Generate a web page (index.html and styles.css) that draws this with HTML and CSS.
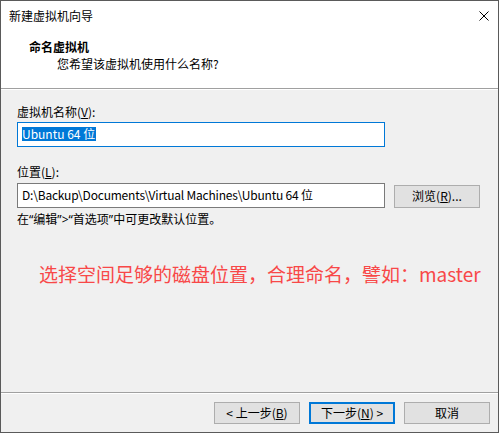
FILE: index.html
```html
<!DOCTYPE html>
<html lang="zh-CN">
<head>
<meta charset="utf-8">
<title>新建虚拟机向导</title>
<link rel="stylesheet" href="styles.css">
</head>
<body>
<div class="window">
  <div class="titlebar">
    <span class="title">新建虚拟机向导</span>
    <svg class="close" width="10" height="10" viewBox="0 0 10 10"><path d="M0.5 0.5 L9.5 9.5 M9.5 0.5 L0.5 9.5" stroke="#000" stroke-width="1" fill="none"/></svg>
  </div>
  <div class="header">
    <div class="heading">命名虚拟机</div>
    <div class="subtitle">您希望该虚拟机使用什么名称?</div>
  </div>
  <div class="content">
    <div class="label">虚拟机名称(<u>V</u>):</div>
    <div class="input focused"><span class="sel">Ubuntu 64 位</span></div>
    <div class="label second">位置(<u>L</u>):</div>
    <div class="row">
      <div class="input path">D:\Backup\Documents\Virtual Machines\Ubuntu 64 位</div>
      <div class="btn browse">浏览(<u>R</u>)...</div>
    </div>
    <div class="note">在<span class="q">“</span>编辑<span class="q">”&gt;“</span>首选项<span class="q">”</span>中可更改默认位置。</div>
    <div class="hint">选择空间足够的磁盘位置，合理命名，譬如：master</div>
  </div>
  <div class="footer">
    <div class="btn">&lt; 上一步(<u>B</u>)</div>
    <div class="btn default">下一步(<u>N</u>) &gt;</div>
    <div class="btn cancel">取消</div>
  </div>
</div>
</body>
</html>
```

FILE: styles.css
```css
* { box-sizing: border-box; }
html, body { margin: 0; padding: 0; }
body {
  width: 499px;
  height: 433px;
  font-family: "Noto Sans CJK SC", "Noto Sans", sans-serif;
  font-size: 12px;
  color: #000;
  background: #f0f0f0;
}
.window {
  width: 499px;
  height: 433px;
  border: 1px solid #5a5a5a;
  background: #f0f0f0;
  display: flex;
  flex-direction: column;
}
.titlebar {
  height: 30px;
  background: #fff;
  display: flex;
  align-items: center;
  justify-content: space-between;
  padding: 0 9px 0 8px;
  line-height: 16px;
}
.close { display: block; margin-top: -1px; }
.header {
  height: 58px;
  background: #fff;
  padding: 8px 0 0 28px;
  border-bottom: 1px solid #a0a0a0;
  box-shadow: 0 1px 0 #fff;
  line-height: 16px;
}
.heading { font-weight: bold; }
.subtitle { padding-left: 28px; margin-top: 1px; }
.content {
  padding: 15px 16px 0 16px;
  flex: 1;
  line-height: 16px;
}
.label { margin-bottom: 2px; }
.label.second { margin-top: 17px; margin-bottom: 3px; }
.input {
  width: 368px;
  height: 25px;
  background: #fff;
  border: 1px solid #7a7a7a;
  padding: 3px 0 0 4px;
  white-space: nowrap;
  overflow: hidden;
}
.input.path { letter-spacing: -0.2px; }
.input.focused { border-color: #0078d7; padding-top: 3px; }
.sel {
  background: #0078d7;
  color: #fff;
  display: inline-block;
  height: 14px;
  line-height: 14px;
  padding-right: 1px;
}
.row { display: flex; align-items: center; gap: 9px; }
.btn {
  width: 86px;
  height: 22px;
  background: #e1e1e1;
  border: 1px solid #adadad;
  display: flex;
  align-items: center;
  justify-content: center;
  line-height: 16px;
  white-space: pre;
}
.browse { height: 23px; margin-top: 1px; }
.note { margin-top: 3px; }
.q { font-family: "Noto Sans", sans-serif; }
.hint {
  margin-top: 32px;
  padding-left: 22px;
  color: #f84848;
  font-size: 19px;
  line-height: 28px;
  white-space: nowrap;
}
.footer {
  height: 40px;
  border-top: 1px solid #a0a0a0;
  box-shadow: inset 0 1px 0 #fff;
  display: flex;
  justify-content: flex-end;
  align-items: flex-start;
  padding: 9px 8px 0 0;
  gap: 9px;
}
.btn.default { border: 2px solid #0078d7; width: 86px; }
```
